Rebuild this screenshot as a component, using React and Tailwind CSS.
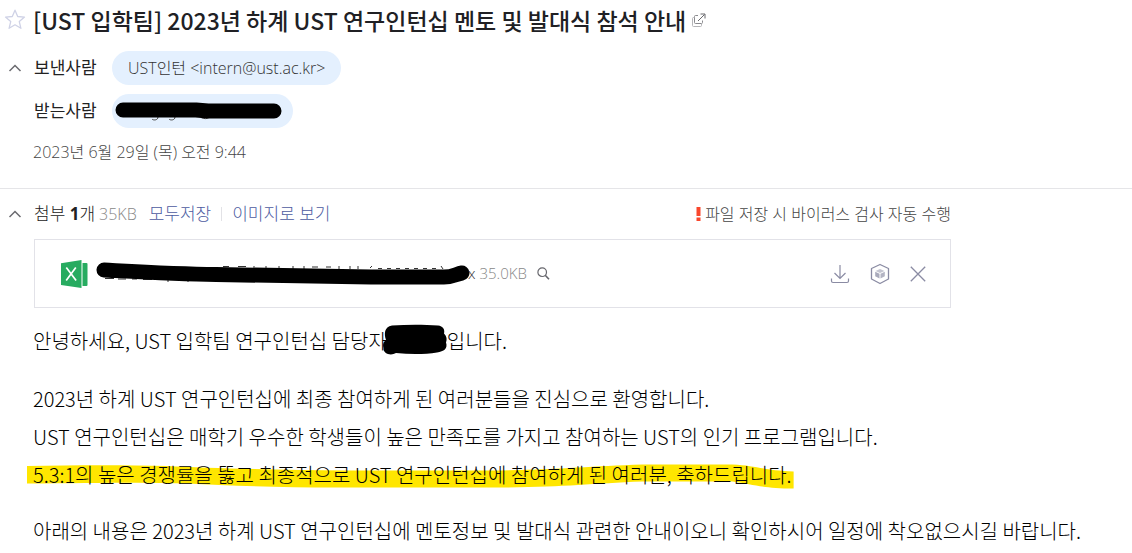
import React, { useState } from "react";

const paragraphs = [
  { text: "2023년 하계 UST 연구인턴십에 최종 참여하게 된 여러분들을 진심으로 환영합니다." },
  { text: "UST 연구인턴십은 매학기 우수한 학생들이 높은 만족도를 가지고 참여하는 UST의 인기 프로그램입니다." },
  {
    text: "5.3:1의 높은 경쟁률을 뚫고 최종적으로 UST 연구인턴십에 참여하게 된 여러분, 축하드립니다.",
    marked: true,
  },
];

const StarIcon = () => (
  <svg width="22" height="22" viewBox="0 0 22 22" fill="none" stroke="#cfd2e6" strokeWidth="1.3" strokeLinejoin="round">
    <path d="M11 1.2l2.7 6.300 6.800.6-5.200 4.500 1.600 6.700-5.900-3.500-5.900 3.500 1.600-6.700L1.500 8.100l6.800-.6z" />
  </svg>
);

const PopupIcon = () => (
  <svg width="14" height="14" viewBox="0 0 14 14" fill="none" stroke="#8a8a8e">
    <path d="M6 2.500H3.500a1 1 0 0 0-1 1V9.500a1 1 0 0 0 1 1h6a1 1 0 0 0 1-1V7.500" />
    <path d="M2.500 4.500H1.500a1 1 0 0 0-1 1v7a1 1 0 0 0 1 1h7a1 1 0 0 0 1-1v-2" stroke="#b5b5b8" />
    <path d="M6 8l6.500-6.500M8.500 1H13v4.500" stroke="#68686c" />
  </svg>
);

const ChevronIcon = ({ open }) => (
  <svg width="14" height="8" viewBox="0 0 14 8" fill="none" stroke="#6b6b70" strokeWidth="1.5" className={open ? "" : "rotate-180"}>
    <path d="M1.500 7L7 1.500 12.500 7" />
  </svg>
);

const ExcelIcon = () => (
  <svg width="28" height="30" viewBox="0 0 28 30" className="shrink-0">
    <path d="M22.500 4h4a1 1 0 0 1 1 1v21a1 1 0 0 1-1 1h-4z" fill="#27ab60" />
    <path d="M1 4.200L21.500 1v28L1 26z" fill="#27ab60" />
    <path d="M6.300 8.500l9.800 13M15.800 8.500l-9.600 13" stroke="#fff" strokeWidth="1.700" fill="none" />
  </svg>
);

const SearchIcon = () => (
  <svg width="13" height="13" viewBox="0 0 13 13" fill="none" stroke="#66666c">
    <circle cx="5.200" cy="5.200" r="4.300" strokeWidth="1.200" />
    <path d="M8.200 8.200l3.800 4" strokeWidth="1.600" />
  </svg>
);

const DownloadIcon = () => (
  <svg width="20" height="20" viewBox="0 0 20 20" fill="none" stroke="#8a8ba3" strokeWidth="1.200">
    <path d="M10 1v13M4.500 9l5.500 5.500L15.500 9" />
    <path d="M1.500 14.500v2.500a1.500 1.500 0 0 0 1.500 1.500h14a1.500 1.500 0 0 0 1.500-1.500v-2.500" />
  </svg>
);

const CloudBoxIcon = () => (
  <svg width="20" height="22" viewBox="0 0 20 22" fill="none">
    <path d="M10 1.500l8.500 4v10.500L10 20.500 1.500 16V5.500z" stroke="#8a8ba3" strokeWidth="1.300" strokeLinejoin="round" />
    <path d="M10 6l4.500 2L10 10 5.500 8z" fill="#c3c4d0" />
    <path d="M5.200 8.800l4.300 2v4.700l-4.300-2.200z" fill="#a9aabb" />
    <path d="M14.800 8.800l-4.300 2v4.700l4.300-2.200z" fill="#b3b4c3" />
  </svg>
);

const CloseIcon = () => (
  <svg width="16" height="16" viewBox="0 0 16 16" fill="none" stroke="#8a8ba3" strokeWidth="1.300">
    <path d="M.8.8l14.400 14.400M15.200.8L.8 15.200" />
  </svg>
);

const AddressScribble = () => (
  <svg width="168" height="20" viewBox="0 0 168 20" fill="none" className="block">
    <path d="M43 16c0 3.500-5 3.500-6 2M60 16c0 3.500-5 3.500-6 2M86 16.500c3 1.500 6 1.500 8 0" stroke="#444" />
    <path d="M8 9h73l12 1h66" stroke="#000" strokeWidth="15" strokeLinecap="round" strokeLinejoin="round" />
  </svg>
);

const FileScribble = () => (
  <svg width="376" height="24" viewBox="0 0 376 24" fill="none" className="block">
    <path
      d="M9 16.500h9M22 17h8M36 17h5M47 17.500h9M72 17v3M92 17v3M127 4.500h6M142 4.500h8M158 4v3M170 4v3M183 4v3M197 4v3M208 4v3M216 5h6M230 5h5M243 4v3M254 4v3M262 4v3M274 6l2-2M282 6.500h4M291 6.500h4M300 6.500h4M309 6.500h4M318 6.500h4M327 6.500h4M336 6.500h4M345 4l2 3"
      stroke="#333"
    />
    <path d="M8 8c38 2 72 4 112 4.500 60 1 110 2 155 2.500h73c9 0 12-3 18-4" stroke="#000" strokeWidth="15" strokeLinecap="round" />
  </svg>
);

const NameScribble = () => (
  <svg width="68" height="32" viewBox="0 0 68 32" className="absolute -left-1.5 -top-2">
    <path
      d="M11 1.500c15-1 32-1 46 0 5 .5 7 4 6 8 3 3 3 6 2 9 2 6-2 9-9 10-12 2-27 2-41 0.500C10 32 2 30 2.500 24c-1-4 0-6 2.500-8-2-6-2-13 6-14.500z"
      fill="#000"
    />
  </svg>
);

const Highlight = () => (
  <svg
    viewBox="0 0 766 26"
    preserveAspectRatio="none"
    className="absolute -left-1.5 top-2 -z-10 h-[26px] w-[calc(100%+8px)]"
  >
    <path
      d="M0 2C50 1 100 1 140 2c40 2 110 4 180 4.500h125c80 0 110-4 170-6h90c24 1 30 6 61 7v17c-30 0-40-4-61-7h-90c-55 2-80 6-150 6H310c-60 0-110-2-150-4C110 18 60 19.500 0 19.500z"
      fill="#ffe600"
    />
  </svg>
);

const App = () => {
  const [headerOpen, setHeaderOpen] = useState(true);
  const [filesOpen, setFilesOpen] = useState(true);

  return (
    <div className="overflow-hidden bg-white font-['Open_Sans','Noto_Sans_CJK_KR',sans-serif] text-[#222]">
      <header className="border-b border-[#e5e5e8] pb-[22px]">
        <div className="flex h-10 items-center pl-1">
          <button type="button" aria-label="중요 메일" className="w-7">
            <StarIcon />
          </button>
          <h1 className="ml-px font-['Noto_Sans_CJK_KR',sans-serif] text-[23px] leading-8 font-medium whitespace-nowrap text-[#202024]">
            [UST 입학팀] 2023년 하계 UST 연구인턴십 멘토 및 발대식 참석 안내
          </h1>
          <button type="button" aria-label="새 창으로 보기" className="ml-1.5">
            <PopupIcon />
          </button>
        </div>

        <div className="mt-2 flex h-10 items-center pl-2">
          <button type="button" aria-label="상세 정보" className="w-6" onClick={() => setHeaderOpen(!headerOpen)}>
            <ChevronIcon open={headerOpen} />
          </button>
          <span className="ml-0.5 w-[78px] text-[17px] whitespace-nowrap">보낸사람</span>
          <button type="button" className="h-[34px] rounded-full bg-[#e4f0fe] px-4 text-base font-light whitespace-nowrap text-[#333]">
            UST인턴 &lt;intern@ust.ac.kr&gt;
          </button>
        </div>

        {headerOpen && (
          <div className="mt-[3px] flex h-10 items-center pl-[34px]">
            <span className="w-[78px] text-[17px] whitespace-nowrap">받는사람</span>
            <button type="button" aria-label="받는사람 주소" className="h-[34px] w-[181px] rounded-full bg-[#e4f0fe] px-[3px]">
              <AddressScribble />
            </button>
          </div>
        )}

        <p className="mt-[7px] pl-[33px] text-base leading-7 font-light text-[#444]">2023년 6월 29일 (목) 오전 9:44</p>
      </header>

      <section className="w-[84%]">
        <div className="flex h-[50px] items-center pl-2 whitespace-nowrap">
          <button type="button" aria-label="첨부 목록" className="w-6" onClick={() => setFilesOpen(!filesOpen)}>
            <ChevronIcon open={filesOpen} />
          </button>
          <span className="ml-0.5 text-[17px] font-light">
            첨부 <b className="font-bold">1</b>개
          </span>
          <span className="ml-1 text-base font-light text-[#888]">35KB</span>
          <button type="button" className="ml-3 text-[17px] font-light text-[#4d5b9f]">모두저장</button>
          <span className="mx-2.5 h-3.5 w-px bg-[#e2e2e6]" />
          <button type="button" className="text-[17px] font-light text-[#4d5b9f]">이미지로 보기</button>
          <p className="ml-auto flex items-center gap-1 text-base font-light text-[#444]">
            <svg width="5" height="14" viewBox="0 0 5 14" fill="#f9472c">
              <path d="M.5 0h4v9h-4zM.5 10.500h4V14h-4z" />
            </svg>
            파일 저장 시 바이러스 검사 자동 수행
          </p>
        </div>

        {filesOpen && (
          <div className="ml-[34px] flex h-[69px] items-center border border-[#e2e2e8] pr-6 pl-[25px]">
            <ExcelIcon />
            <span className="ml-2 flex items-center whitespace-nowrap text-[15px] font-light text-[#333]">
              <FileScribble />
              <span className="-ml-1">x</span>
              <span className="ml-1 text-[#888]">35.0KB</span>
            </span>
            <button type="button" aria-label="미리보기" className="ml-2.5">
              <SearchIcon />
            </button>
            <div className="ml-auto flex items-center gap-5">
              <button type="button" aria-label="다운로드">
                <DownloadIcon />
              </button>
              <button type="button" aria-label="클라우드에 저장">
                <CloudBoxIcon />
              </button>
              <button type="button" aria-label="삭제">
                <CloseIcon />
              </button>
            </div>
          </div>
        )}
      </section>

      <article className="isolate mt-3.5 pl-[33px] font-['Noto_Sans_CJK_KR',sans-serif] text-xl leading-[38px] font-light whitespace-nowrap text-black">
        <p>
          안녕하세요, UST 입학팀 연구인턴십 담당자
          <span className="relative inline-block h-6 w-[60px] align-middle">
            <NameScribble />
          </span>
          입니다.
        </p>
        <div className="mt-5">
          {paragraphs.map((p) => (
            <p key={p.text}>
              {p.marked ? (
                <span className="relative inline-block">
                  <Highlight />
                  {p.text}
                </span>
              ) : (
                p.text
              )}
            </p>
          ))}
        </div>
        <p className="mt-[18px]">
          아래의 내용은 2023년 하계 UST 연구인턴십에 멘토정보 및 발대식 관련한 안내이오니 확인하시어 일정에 착오없으시길 바랍니다.
        </p>
      </article>
    </div>
  );
};

export default App;
